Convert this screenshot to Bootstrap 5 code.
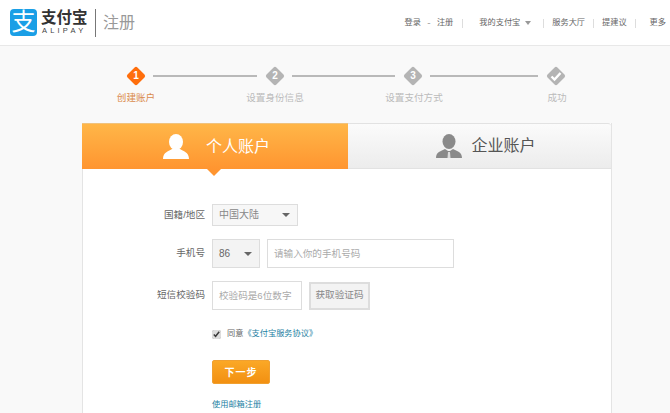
<!DOCTYPE html>
<html lang="zh-CN">
<head>
    <meta charset="UTF-8">
    <title>注册</title>
    <link href="https://cdn.jsdelivr.net/npm/bootstrap@5.3.2/dist/css/bootstrap.min.css" rel="stylesheet">
    <style>
        html, body { height: 413px; overflow: hidden; }
        body { background: #f9f9f9; font-family: "Liberation Sans", "Noto Sans CJK SC", sans-serif; font-size: 10px; color: #666; }

        .site-header { height: 46px; background: #fff; border-bottom: 1px solid #e8e8e8; padding: 0 4px 0 10px; }
        .logo-mark { width: 27px; height: 27px; border-radius: 4px; background: #1a9fe6; color: #fff; font-size: 24px; line-height: 26px; text-align: center; }
        .logo-text { margin-left: 4px; width: 48px; }
        .logo-cn { font-size: 15.5px; line-height: 16px; font-weight: 700; color: #333; white-space: nowrap; }
        .logo-en { font-size: 7.5px; line-height: 9px; letter-spacing: 3.2px; padding-left: 1px; color: #444; white-space: nowrap; }
        .logo-divider { width: 1px; height: 28px; background: #777; margin: 0 7px 0 6px; }
        .logo-page { font-size: 16px; color: #999; }

        .top-nav { color: #666; white-space: nowrap; line-height: 12px; padding-top: 1px; }
        .top-nav a { color: #666; text-decoration: none; font-size: 8.2px; }
        .top-nav .dash { width: 16px; text-align: center; color: #aaa; }
        .top-nav .sep { width: 1px; height: 9px; background: #ddd; }
        .sep-1 { margin: 0 16px 0 9px; }
        .sep-2 { margin: 0 8px 0 12px; }
        .sep-3 { margin: 0 8px 0 8px; }
        .sep-4 { margin: 0 14px 0 8px; }
        .caret-sm { width: 0; height: 0; border: 3.5px solid transparent; border-top: 4px solid #999; border-bottom: 0; margin-left: 5px; }

        .steps-line { padding: 20px 0 0 126px; }
        .diamond { position: relative; width: 20px; height: 20px; flex: none; color: #fff; font-size: 10px; font-weight: 700; line-height: 20px; text-align: center; }
        .diamond::before { content: ""; position: absolute; left: 3px; top: 3px; width: 14px; height: 14px; border-radius: 2px; background: #b4b4b4; transform: rotate(45deg); }
        .diamond span, .diamond svg { position: relative; }
        .diamond.active::before { background: #ff6e0c; }
        .step-line { height: 2px; background: #b9b9b9; margin: 0 8px 0 7px; }
        .steps-labels { padding: 5px 0 0 86px; height: 37px; font-size: 9.6px; color: #bbb; line-height: 14px; }
        .steps-labels div { width: 100px; text-align: center; white-space: nowrap; }
        .steps-labels .active { color: #d98a4b; }

        .reg-card { width: 530px; margin-left: 82px; height: 290px; background: #fff; border-left: 1px solid #e4e4e4; border-right: 1px solid #e4e4e4; }
        .reg-tab { height: 46px; font-size: 16px; }
        .tab-person { width: 266px; margin-left: -1px; padding-left: 3px; position: relative; background: linear-gradient(#ffb648, #ff9530); color: #fff; border-top: 1px solid #f0c27d; }
        .tab-person::after { content: ""; position: absolute; left: 125px; bottom: -7px; border: 7px solid transparent; border-top-color: #ff9530; border-bottom: 0; }
        .tab-company { flex: 1; padding-left: 13px; background: linear-gradient(#fbfbfb, #ececec); color: #555; border-top: 1px solid #e2e2e2; border-bottom: 1px solid #e2e2e2; border-top-right-radius: 3px; }
        .tab-person svg { margin-right: 17px; }
        .tab-company svg { margin-right: 9px; }

        .reg-form { padding-top: 35px; }
        .form-label-col { width: 122px; text-align: right; margin-right: 7px; color: #666; font-size: 9.6px; flex: none; }
        .field { height: 29px; border: 1px solid #ddd; background: #fff; padding: 0 6px; font-size: 9.6px; line-height: 27px; color: #aaa; white-space: nowrap; }
        .field-select { background: #f7f7f7; color: #888; position: relative; font-size: 10px; }
        .caret-md { position: absolute; top: 50%; right: 7px; margin-top: -2px; width: 0; height: 0; border: 4px solid transparent; border-top: 4px solid #666; border-bottom: 0; }
        .field-region { width: 86px; height: 22px; line-height: 20px; }
        .field-code { width: 48px; background: #f3f3f3; color: #666; }
        .field-phone { width: 187px; margin-left: 7px; }
        .field-sms { width: 90px; }
        .btn-sms { width: 61px; height: 28px; margin-left: 7px; padding: 0; border: 2px solid #ddd; border-radius: 0; background: #f3f3f3; color: #888; font-size: 9.6px; }
        .row-gap-a { margin-bottom: 13px; }
        .agree { padding-left: 129px; margin-top: 17px; height: 14px; line-height: 14px; font-size: 8.2px; }
        .agree input { width: 9px; height: 9px; margin: 0 6px 0 0; accent-color: #ddd; }
        .agree a, .mail-link { color: #1d7fa3; text-decoration: none; }
        .btn-next { display: block; width: 58px; height: 24px; margin: 19px 0 0 129px; padding: 0; border: 1px solid #f0a030; border-radius: 2px; background: linear-gradient(#fba826, #f29012); color: #fff; font-size: 10px; font-weight: 700; letter-spacing: 1px; }
        .mail-link { display: block; margin: 15px 0 0 129px; font-size: 8.2px; line-height: 12px; }
    </style>
</head>
<body>

<!-- 头部 -->
<header class="site-header d-flex align-items-center justify-content-between">
    <div class="d-flex align-items-center">
        <div class="logo-mark">支</div>
        <div class="logo-text">
            <div class="logo-cn">支付宝</div>
            <div class="logo-en">ALIPAY</div>
        </div>
        <div class="logo-divider"></div>
        <div class="logo-page">注册</div>
    </div>
    <nav class="top-nav d-flex align-items-center">
        <a href="#">登录</a>
        <span class="dash">-</span>
        <a href="#">注册</a>
        <span class="sep sep-1"></span>
        <a href="#">我的支付宝</a>
        <span class="caret-sm"></span>
        <span class="sep sep-2"></span>
        <a href="#">服务大厅</a>
        <span class="sep sep-3"></span>
        <a href="#">提建议</a>
        <span class="sep sep-4"></span>
        <a href="#">更多</a>
    </nav>
</header>

<!-- 步骤 -->
<div class="steps-line d-flex align-items-center">
    <div class="diamond active"><span>1</span></div>
    <div class="step-line" style="width:104px"></div>
    <div class="diamond"><span>2</span></div>
    <div class="step-line" style="width:103px"></div>
    <div class="diamond"><span>3</span></div>
    <div class="step-line" style="width:108px"></div>
    <div class="diamond">
        <svg width="12" height="12" viewBox="0 0 12 12"><path d="M1.5 6.5 L4.5 9.5 L10.5 3" fill="none" stroke="#fff" stroke-width="2.4"/></svg>
    </div>
</div>
<div class="steps-labels d-flex">
    <div class="active">创建账户</div>
    <div style="margin-left:39px">设置身份信息</div>
    <div style="margin-left:39px">设置支付方式</div>
    <div style="margin-left:43px">成功</div>
</div>

<!-- 注册卡片 -->
<main class="reg-card">
    <div class="d-flex">
        <div class="reg-tab tab-person d-flex align-items-center justify-content-center">
            <svg width="26" height="25" viewBox="0 0 26 25"><ellipse cx="13" cy="8" rx="7" ry="8" fill="#fff"/><path d="M0 25 C0 18 6 17 9 15 L17 15 C20 17 26 18 26 25 Z" fill="#fff"/></svg>
            <span>个人账户</span>
        </div>
        <div class="reg-tab tab-company d-flex align-items-center justify-content-center">
            <svg width="26" height="24" viewBox="0 0 26 24"><ellipse cx="13" cy="7.5" rx="6.5" ry="7.5" fill="#8a8a8a"/><path d="M0 24 C0 18 5 17 9 15 L12 17 L14 17 L17 15 C21 17 26 18 26 24 Z" fill="#8a8a8a"/><path d="M12 18 L14 18 L14.5 24 L11.5 24 Z" fill="#ddd"/></svg>
            <span>企业账户</span>
        </div>
    </div>

    <form class="reg-form" onsubmit="return false">
        <div class="d-flex align-items-center row-gap-a">
            <label class="form-label-col">国籍/地区</label>
            <div class="field field-select field-region">中国大陆<span class="caret-md"></span></div>
        </div>
        <div class="d-flex align-items-center row-gap-a">
            <label class="form-label-col">手机号</label>
            <div class="field field-select field-code">86<span class="caret-md"></span></div>
            <div class="field field-phone">请输入你的手机号码</div>
        </div>
        <div class="d-flex align-items-center">
            <label class="form-label-col">短信校验码</label>
            <div class="field field-sms">校验码是6位数字</div>
            <button type="button" class="btn btn-sms">获取验证码</button>
        </div>
        <div class="agree d-flex align-items-center">
            <input type="checkbox" checked>
            <span>同意</span><a href="#">《支付宝服务协议》</a>
        </div>
        <button type="button" class="btn btn-next">下一步</button>
        <a href="#" class="mail-link">使用邮箱注册</a>
    </form>
</main>

<script src="https://cdn.jsdelivr.net/npm/bootstrap@5.3.2/dist/js/bootstrap.bundle.min.js"></script>
</body>
</html>
